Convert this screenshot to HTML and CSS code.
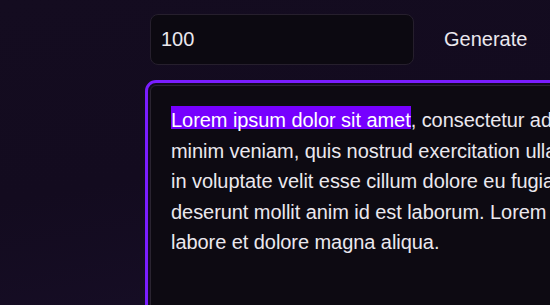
FILE: index.html
```html
<!DOCTYPE html>
<html lang="en">
<head>
<meta charset="utf-8">
<title>Lorem ipsum generator</title>
<link rel="stylesheet" href="styles.css">
</head>
<body>
<main class="page">
  <div class="controls">
    <input class="count" type="text" value="100">
    <button class="generate" type="button">Generate</button>
  </div>
  <div class="output">
    <div class="text">
      <span class="line"><span class="hl">Lorem ipsum dolor sit amet</span>, consectetur adipiscing elit, sed do eiusmod tempor incididunt ut labore et dolore magna aliqua. Ut enim ad</span>
      <span class="line">minim veniam, quis nostrud exercitation ullamco laboris nisi ut aliquip ex ea commodo consequat. Duis aute irure dolor in reprehenderit</span>
      <span class="line">in voluptate velit esse cillum dolore eu fugiat nulla pariatur. Excepteur sint occaecat cupidatat non proident, sunt in culpa qui officia</span>
      <span class="line">deserunt mollit anim id est laborum. Lorem ipsum dolor sit amet, consectetur adipiscing elit, sed do eiusmod tempor incididunt ut</span>
      <span class="line">labore et dolore magna aliqua.</span>
    </div>
  </div>
</main>
</body>
</html>
```
FILE: styles.css
```css
html, body {
  margin: 0;
  padding: 0;
  height: 100%;
  overflow: hidden;
}
body {
  background: linear-gradient(170deg, #140c20 0%, #130b1f 50%, #170e27 100%);
  font-family: "Liberation Sans", Arial, sans-serif;
  color: #ebe8ee;
}
.page {
  padding: 14px 0 0 150px;
  width: 1300px;
}
.controls {
  display: flex;
  align-items: stretch;
  gap: 16px;
}
.count {
  box-sizing: border-box;
  width: 264px;
  height: 51px;
  margin: 0;
  padding: 0 10px;
  background: #0c0911;
  border: 1px solid #261f2d;
  border-radius: 8px;
  color: #ebe8ee;
  font: 20px "Liberation Sans", Arial, sans-serif;
  outline: none;
}
.generate {
  margin: 0;
  padding: 0 14px;
  background: transparent;
  border: 0;
  color: #ebe8ee;
  font: 20px "Liberation Sans", Arial, sans-serif;
}
.output {
  box-sizing: border-box;
  margin-top: 20px;
  width: 1200px;
  height: 300px;
  padding: 19px 20px;
  background: #0d0a12;
  border: 1px solid #2a2431;
  border-radius: 6px;
  outline: 3px solid #7a1dff;
  outline-offset: 2px;
}
.text {
  font-size: 20px;
  line-height: 30.5px;
  letter-spacing: -0.06px;
}
.line {
  display: block;
  white-space: nowrap;
}
.hl {
  padding-top: 3px;
  background: linear-gradient(#7600ff calc(100% - 2px), transparent 0);
  color: #ffffff;
}
```
